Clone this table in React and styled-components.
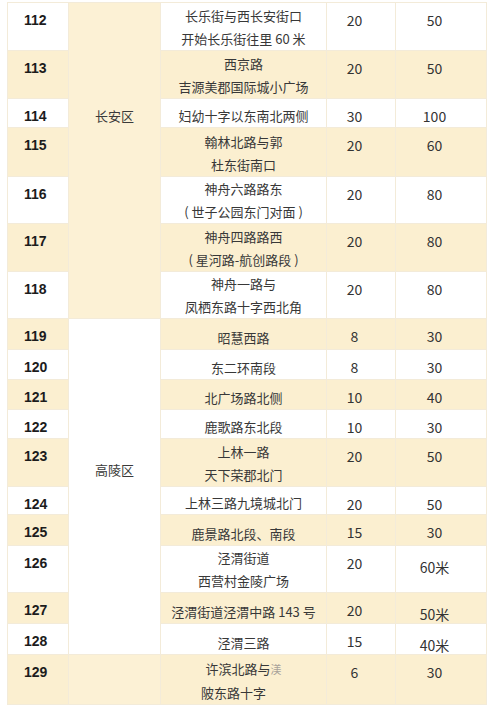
import React from "react";
import styled, { createGlobalStyle } from "styled-components";

const GlobalStyle = createGlobalStyle`
  html, body {
    margin: 0;
    padding: 0;
    background: #ffffff;
  }
  body {
    font-family: "Noto Sans CJK SC", "Noto Sans", sans-serif;
  }
`;

const Page = styled.div`
  width: 500px;
  padding: 2px 0 0 7px;
  box-sizing: border-box;
`;

const Table = styled.table`
  width: 479px;
  table-layout: fixed;
  border-collapse: collapse;
  border: 1px solid #efe7d6;
`;

const Row = styled.tr`
  height: ${(p) => p.$h}px;
  background: ${(p) => (p.$cream ? "#fbefd0" : "#ffffff")};
`;

const Cell = styled.td`
  padding: 0;
  border: 1px solid #f3ebd9;
`;

const NumCell = styled(Cell)`
  vertical-align: top;
  padding: 8px 0 0 16px;
  font-family: "Liberation Sans", Arial, sans-serif;
  font-weight: 700;
  font-size: 14px;
  line-height: 18px;
  color: #1c1c1c;
`;

const DistrictCell = styled(Cell)`
  vertical-align: top;
  text-align: center;
  padding-top: ${(p) => p.$top}px;
  font-size: 13px;
  line-height: 18px;
  color: #3a3a3a;
  background: ${(p) => (p.$cream ? "#fcf1d5" : "#ffffff")};
`;

const PlaceCell = styled(Cell)`
  vertical-align: bottom;
  text-align: center;
  font-size: 13px;
  line-height: 23px;
  color: #383838;
  padding-bottom: 0;
`;

const Line = styled.div`
  padding-right: ${(p) => p.$pad || 0}px;
  white-space: nowrap;
`;

const Faded = styled.span`
  font-size: 11px;
  color: #a8a29a;
`;

const CountCell = styled(Cell)`
  vertical-align: top;
  text-align: center;
  padding: ${(p) => (p.$low ? 12 : 8)}px 13px 0 0;
  font-size: 14px;
  line-height: 18px;
  color: #333333;
`;

const rows = [
  { n: 112, h: 48, lines: ["长乐街与西长安街口", "开始长乐街往里 60 米"], a: "20", b: "50" },
  { n: 113, h: 48, lines: ["西京路", "吉源美郡国际城小广场"], a: "20", b: "50" },
  { n: 114, h: 29, lines: ["妇幼十字以东南北两侧"], a: "30", b: "100" },
  { n: 115, h: 49, lines: ["翰林北路与郭", "杜东街南口"], a: "20", b: "60" },
  { n: 116, h: 47, lines: ["神舟六路路东", "( 世子公园东门对面 )"], a: "20", b: "80" },
  { n: 117, h: 48, lines: ["神舟四路路西", "( 星河路-航创路段 )"], a: "20", b: "80" },
  { n: 118, h: 46, lines: ["神舟一路与", "凤栖东路十字西北角"], a: "20", b: "80" },
  { n: 119, h: 31, lines: ["昭慧西路"], a: "8", b: "30" },
  { n: 120, h: 30, lines: ["东二环南段"], a: "8", b: "30" },
  { n: 121, h: 30, lines: ["北广场路北侧"], a: "10", b: "40" },
  { n: 122, h: 29, lines: ["鹿歌路东北段"], a: "10", b: "30" },
  { n: 123, h: 48, lines: ["上林一路", "天下荣郡北门"], a: "20", b: "50" },
  { n: 124, h: 28, lines: ["上林三路九境城北门"], a: "20", b: "50" },
  { n: 125, h: 31, lines: ["鹿景路北段、南段"], a: "15", b: "30" },
  { n: 126, h: 45, lines: ["泾渭街道", "西营村金陵广场"], a: "20", b: "60米", low: true },
  { n: 127, h: 31, lines: ["泾渭街道泾渭中路 143 号"], a: "20", b: "50米", low: true },
  { n: 128, h: 29, lines: ["泾渭三路"], a: "15", b: "40米", low: true },
  { n: 129, h: 50, lines: [<>许滨北路与<Faded>渼</Faded></>, "陂东路十字"], pad: [0, 20], a: "6", b: "30" },
];

// merged district cells: first row index, span, text offset
const districts = {
  0: { name: "长安区", span: 7, top: 104, cream: true },
  7: { name: "高陵区", span: 10, top: 142, cream: false },
  17: { name: "", span: 1, top: 0, cream: true },
};

export default function App() {
  return (
    <Page>
      <GlobalStyle />
      <Table>
        <colgroup>
          <col style={{ width: 61 }} />
          <col style={{ width: 92 }} />
          <col style={{ width: 166 }} />
          <col style={{ width: 69 }} />
          <col style={{ width: 91 }} />
        </colgroup>
        <tbody>
          {rows.map((r, i) => {
            const d = districts[i];
            return (
              <Row key={r.n} $h={r.h} $cream={i % 2 === 1}>
                <NumCell>{r.n}</NumCell>
                {d && (
                  <DistrictCell rowSpan={d.span} $top={d.top} $cream={d.cream}>
                    {d.name}
                  </DistrictCell>
                )}
                <PlaceCell>
                  {r.lines.map((l, k) => (
                    <Line key={k} $pad={r.pad ? r.pad[k] : 0}>{l}</Line>
                  ))}
                </PlaceCell>
                <CountCell>{r.a}</CountCell>
                <CountCell $low={r.low}>{r.b}</CountCell>
              </Row>
            );
          })}
        </tbody>
      </Table>
    </Page>
  );
}
